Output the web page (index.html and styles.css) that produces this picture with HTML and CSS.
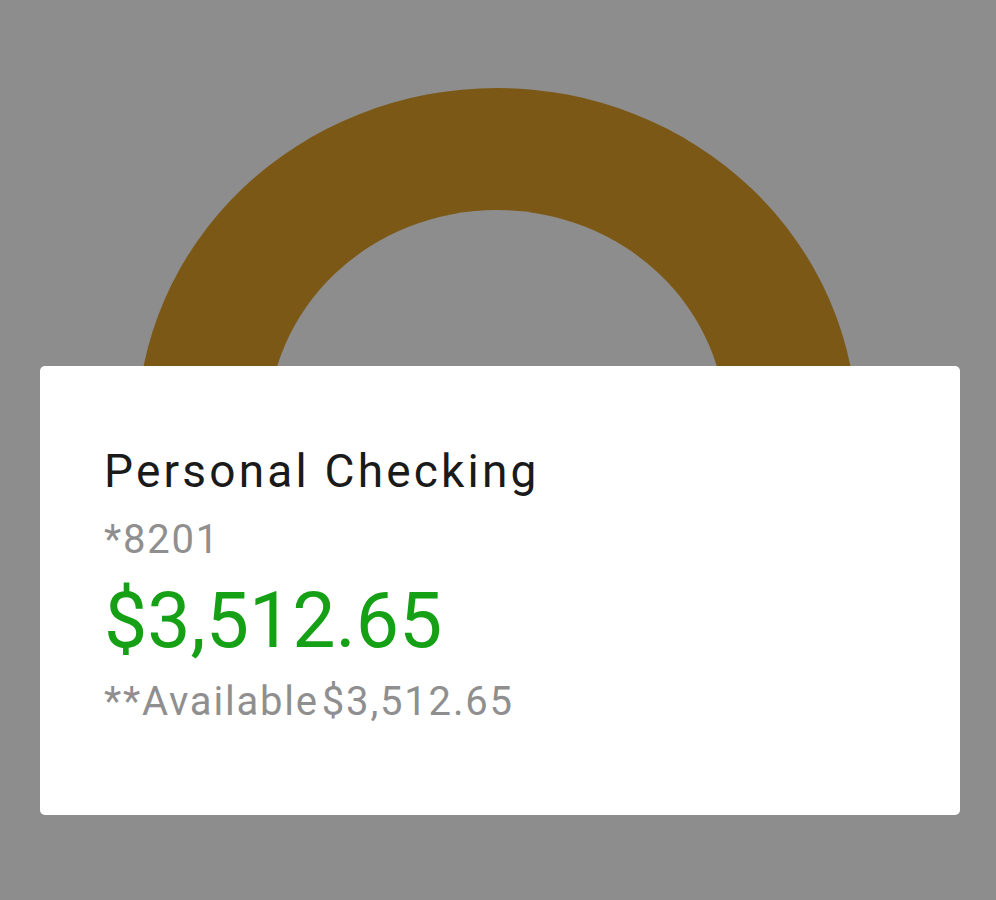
FILE: index.html
```html
<!DOCTYPE html>
<html lang="en">
<head>
    <meta charset="UTF-8">
    <meta name="viewport" content="width=device-width, initial-scale=1.0">
    <title>Account Balance</title>
    <link rel="stylesheet" href="styles.css">
</head>
<body>
    <!-- Balance ring behind the card -->
    <svg class="balance-ring" width="996" height="900" viewBox="0 0 996 900" aria-hidden="true">
        <ellipse cx="497" cy="431.5" rx="360" ry="343.5" fill="#7c5816"></ellipse>
        <ellipse cx="497" cy="427" rx="229" ry="217" fill="#8d8d8d"></ellipse>
    </svg>

    <!-- Account card -->
    <div class="account-card">
        <h1 class="account-name">Personal Checking</h1>
        <p class="account-number">*8201</p>
        <p class="account-balance">$3,512.65</p>
        <p class="account-available">
            <span>**Available</span><span>$3,512.65</span>
        </p>
    </div>
</body>
</html>
```

FILE: styles.css
```css
* {
    margin: 0;
    padding: 0;
    box-sizing: border-box;
}

body {
    font-family: 'Roboto', 'Noto Sans', sans-serif;
    background: #8d8d8d;
    width: 996px;
    height: 900px;
    overflow: hidden;
    position: relative;
}

.balance-ring {
    position: absolute;
    top: 0;
    left: 0;
    z-index: 0;
}

.account-card {
    position: relative;
    z-index: 1;
    margin: 366px 0 0 40px;
    width: 920px;
    height: 449px;
    background: #ffffff;
    border-radius: 5px;
    padding: 73px 0 0 64px;
}

.account-name {
    font-size: 46px;
    font-weight: 400;
    line-height: 64px;
    letter-spacing: 3.2px;
    color: #1a1a1a;
}

.account-number {
    font-size: 40px;
    line-height: 73px;
    letter-spacing: 1.8px;
    color: #8f8f8f;
}

.account-balance {
    font-size: 77px;
    line-height: 91px;
    color: #16a016;
}

.account-available {
    font-size: 40px;
    line-height: 69px;
    letter-spacing: 1.8px;
    color: #8f8f8f;
    display: flex;
    gap: 3px;
}
```
